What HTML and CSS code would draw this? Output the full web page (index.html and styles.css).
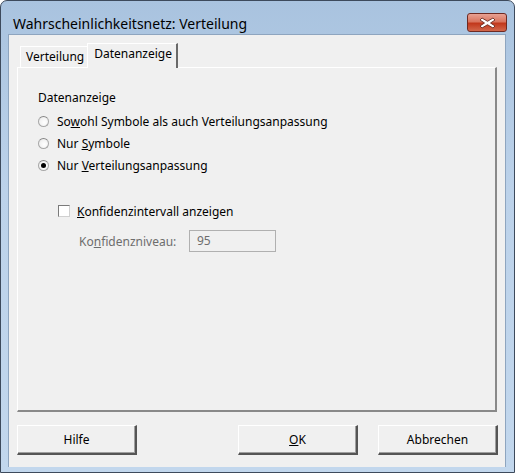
FILE: index.html
```html
<!DOCTYPE html>
<html lang="de">
<head>
    <meta charset="UTF-8">
    <title>Wahrscheinlichkeitsnetz: Verteilung</title>
    <link rel="stylesheet" href="styles.css">
</head>
<body>
    <div class="window">

        <div class="titlebar">
            <span class="title">Wahrscheinlichkeitsnetz: Verteilung</span>
            <div class="close">
                <svg width="17" height="12" viewBox="0 0 17 12">
                    <path d="M3 1 L8.5 4.3 L14 1 L16 3 L11.5 6 L16 9 L14 11 L8.5 7.7 L3 11 L1 9 L5.5 6 L1 3 Z" fill="#fff" stroke="#5a1a10" stroke-width="0.8" stroke-linejoin="round"/>
                </svg>
            </div>
        </div>

        <div class="client">

            <div class="tabs">
                <div class="tab">Verteilung</div>
                <div class="tab active">Datenanzeige</div>
            </div>

            <div class="panel">
                <div class="group-label">Datenanzeige</div>

                <label class="option">
                    <span class="radio"></span>
                    <span>So<u>w</u>ohl Symbole als auch Verteilungsanpassung</span>
                </label>
                <label class="option">
                    <span class="radio"></span>
                    <span>Nur <u>S</u>ymbole</span>
                </label>
                <label class="option">
                    <span class="radio checked"></span>
                    <span>Nur <u>V</u>erteilungsanpassung</span>
                </label>

                <label class="check-row">
                    <span class="checkbox"></span>
                    <span><u>K</u>onfidenzintervall anzeigen</span>
                </label>

                <div class="level-row">
                    <span class="level-label">Ko<u>n</u>fidenzniveau:</span>
                    <div class="textbox">95</div>
                </div>
            </div>

            <div class="buttons">
                <button class="btn">Hilfe</button>
                <div class="right-buttons">
                    <button class="btn"><u>O</u>K</button>
                    <button class="btn">Abbrechen</button>
                </div>
            </div>

        </div>
    </div>
</body>
</html>
```

FILE: styles.css
```css
body {
    margin: 0;
    width: 515px;
    height: 473px;
    overflow: hidden;
    font-family: "Noto Sans", "Open Sans", sans-serif;
    font-size: 12px;
    color: #000;
    background: #fff;
}

.window {
    box-sizing: border-box;
    width: 515px;
    height: 473px;
    display: flex;
    flex-direction: column;
    border: 1px solid #3d4a5c;
    border-radius: 7px 7px 0 0;
    padding: 0 8px 5px 7px;
    background: linear-gradient(to bottom, #a9c3df 0%, #bcd2ea 40%, #c2d7ed 100%);
}

.titlebar {
    box-sizing: border-box;
    height: 34px;
    padding-top: 10px;
    display: flex;
    align-items: center;
    justify-content: space-between;
}

.title {
    font-size: 14px;
    color: #000;
    padding-left: 5px;
    margin-top: 1px;
}

.close {
    width: 40px;
    height: 19px;
    margin-right: -1px;
    box-sizing: border-box;
    border: 1px solid #6e2a22;
    border-radius: 3px;
    display: flex;
    align-items: center;
    justify-content: center;
    background: linear-gradient(to bottom, #e8a193 0%, #d9755f 45%, #c2381c 55%, #d2674b 100%);
}

.client {
    flex: 1;
    display: flex;
    flex-direction: column;
    background: #f0f0f0;
    padding: 8px 8px 12px 8px;
    border: 1px solid #8ea5bf;
    border-bottom: none;
}

.tabs {
    display: flex;
    align-items: flex-end;
    height: 24px;
    padding-left: 3px;
}

.tab {
    height: 21px;
    line-height: 19px;
    padding: 0 4px 0 5px;
    box-sizing: border-box;
    border: 1px solid #fff;
    border-right: 1px solid #a0a0a0;
    border-bottom: none;
    background: #f0f0f0;
}

.tab.active {
    height: 25px;
    margin-left: -2px;
    margin-bottom: -1px;
    padding: 0 4px 0 6px;
    line-height: 20px;
    border-right: 2px solid #696969;
    position: relative;
    z-index: 1;
}

.panel {
    height: 345px;
    box-sizing: border-box;
    border: 1px solid #fff;
    border-right: 2px solid #898989;
    border-bottom: 2px solid #898989;
    padding: 21px 0 0 20px;
}

.group-label {
    height: 22px;
    line-height: 18px;
    margin-bottom: -1px;
}

.option {
    display: flex;
    align-items: center;
    height: 22px;
}

.radio {
    width: 9px;
    height: 9px;
    margin-right: 8px;
    border-radius: 50%;
    border: 1px solid #a8a8a8;
    border-top-color: #858585;
    background: radial-gradient(circle at 60% 60%, #fff 0%, #f2f2f2 60%, #dcdcdc 100%);
    position: relative;
}

.radio.checked::after {
    content: "";
    position: absolute;
    left: 2px;
    top: 2px;
    width: 5px;
    height: 5px;
    border-radius: 50%;
    background: #000;
}

.check-row {
    display: flex;
    align-items: center;
    margin-top: 24px;
    margin-left: 20px;
    height: 22px;
}

.checkbox {
    width: 10px;
    height: 10px;
    margin-right: 7px;
    border: 1px solid #7a7a7a;
    border-right-color: #d0d0d0;
    border-bottom-color: #d0d0d0;
    background: #fff;
}

.level-row {
    display: flex;
    align-items: center;
    margin-top: 8px;
    margin-left: 41px;
}

.level-label {
    color: #6d6d6d;
    width: 110px;
}

.textbox {
    box-sizing: border-box;
    width: 87px;
    height: 22px;
    line-height: 20px;
    padding-left: 7px;
    color: #6d6d6d;
    border: 1px solid #b0b0b0;
    background: #f0f0f0;
}

.buttons {
    display: flex;
    justify-content: space-between;
    margin-top: 13px;
    margin-right: -1px;
}

.right-buttons {
    display: flex;
    gap: 20px;
}

.btn {
    width: 120px;
    height: 30px;
    padding: 0;
    font-family: inherit;
    font-size: 12px;
    color: #000;
    background: #f0f0f0;
    border: 1px solid #fff;
    border-right: 2px solid #555;
    border-bottom: 2px solid #555;
    box-shadow: inset -1px -1px 0 #a0a0a0;
}
```
